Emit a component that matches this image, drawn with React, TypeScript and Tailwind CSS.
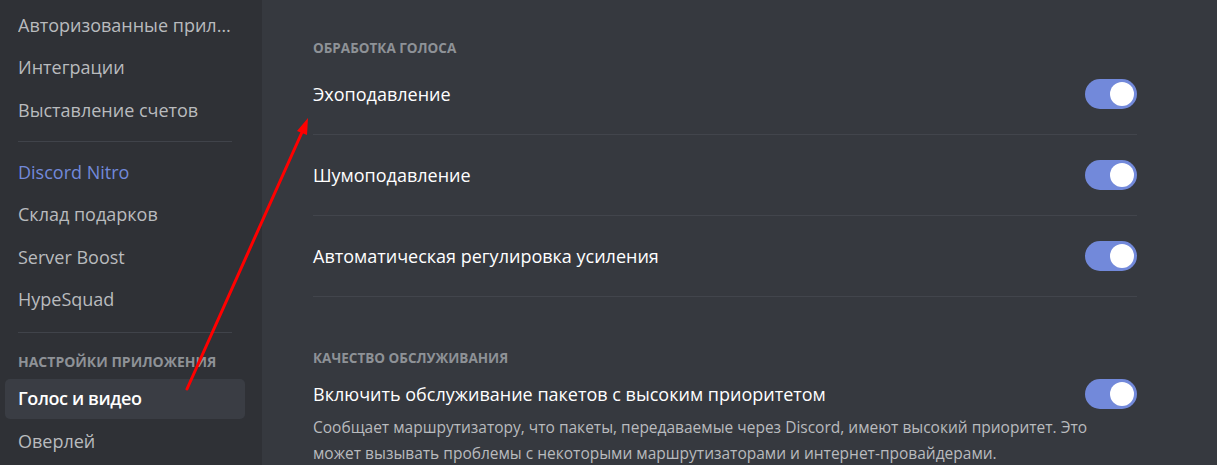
import React from "react";

const font = { fontFamily: '"Open Sans", "Noto Sans", sans-serif' };

function NavItem({
  label,
  active,
  accent,
}: {
  label: string;
  active?: boolean;
  accent?: boolean;
}) {
  return (
    <div
      className={
        "mb-[2.5px] flex h-[40px] items-center rounded-[5px] px-[13px] text-[18px] " +
        (active
          ? "bg-[#3a3d44] font-semibold text-white"
          : accent
            ? "text-[#7289da]"
            : "text-[#b9bbbe]")
      }
    >
      <span className={"truncate " + (active ? "tracking-[-0.4px]" : "")}>{label}</span>
    </div>
  );
}

function NavDivider({ top, bottom }: { top: string; bottom: string }) {
  return <div className={"mx-[13px] h-px bg-[#40434a] " + top + " " + bottom} />;
}

function Toggle() {
  return (
    <div className="flex h-[30px] w-[52px] shrink-0 items-center justify-end rounded-full bg-[#7289da] pr-[3px]">
      <div className="h-[24px] w-[24px] rounded-full bg-white" />
    </div>
  );
}

function SettingRow({ title, first }: { title: string; first?: boolean }) {
  return (
    <div
      className={
        "border-b border-[#42454c] pb-[25px] " + (first ? "pt-[23px]" : "pt-[25px]")
      }
    >
      <div className="flex h-[30px] items-center justify-between">
        <span className="text-[18px] font-medium text-white">{title}</span>
        <Toggle />
      </div>
    </div>
  );
}

function SectionHeading({ children }: { children: React.ReactNode }) {
  return (
    <div className="flex h-[16px] items-center text-[13.5px] font-bold uppercase text-[#8e9297]">
      {children}
    </div>
  );
}

export default function App() {
  return (
    <div className="relative flex h-[465px] w-[1217px] overflow-hidden bg-[#36393f]" style={font}>
      <aside className="w-[262px] shrink-0 bg-[#2f3136] pt-[5px]">
        <div className="ml-[5px] w-[240px]">
          <NavItem label="Авторизованные приложения" />
          <NavItem label="Интеграции" />
          <NavItem label="Выставление счетов" />
          <NavDivider top="mt-[11px]" bottom="mb-[10px]" />
          <NavItem label="Discord Nitro" accent />
          <NavItem label="Склад подарков" />
          <NavItem label="Server Boost" />
          <NavItem label="HypeSquad" />
          <NavDivider top="mt-[12px]" bottom="mb-[21px]" />
          <div className="mb-[9px] flex h-[16px] items-center px-[13px] text-[14px] font-bold uppercase text-[#8e9297]">
            Настройки приложения
          </div>
          <NavItem label="Голос и видео" active />
          <NavItem label="Оверлей" />
        </div>
      </aside>

      <main className="flex-1 pl-[51px] pt-[40px]">
        <div className="w-[824px]">
          <SectionHeading>Обработка голоса</SectionHeading>
          <SettingRow title="Эхоподавление" first />
          <SettingRow title="Шумоподавление" />
          <SettingRow title="Автоматическая регулировка усиления" />

          <div className="mt-[53px]">
            <SectionHeading>Качество обслуживания</SectionHeading>
          </div>
          <div className="mt-[13px] flex h-[30px] items-center justify-between">
            <span className="text-[18px] font-medium text-white">
              Включить обслуживание пакетов с высоким приоритетом
            </span>
            <Toggle />
          </div>
          <p className="mt-[5px] text-[15.5px] leading-[26px] text-[#b9bbbe]">
            Сообщает маршрутизатору, что пакеты, передаваемые через Discord, имеют высокий приоритет. Это
            <br />
            может вызывать проблемы с некоторыми маршрутизаторами и интернет-провайдерами.
          </p>
        </div>
      </main>

      <svg
        className="pointer-events-none absolute left-0 top-0"
        width="1217"
        height="465"
        viewBox="0 0 1217 465"
      >
        <line x1="187" y1="389" x2="303" y2="130" stroke="#f00" strokeWidth="3" strokeLinecap="round" />
        <polygon points="308,118 297,131 307,135" fill="#f00" />
      </svg>
    </div>
  );
}
